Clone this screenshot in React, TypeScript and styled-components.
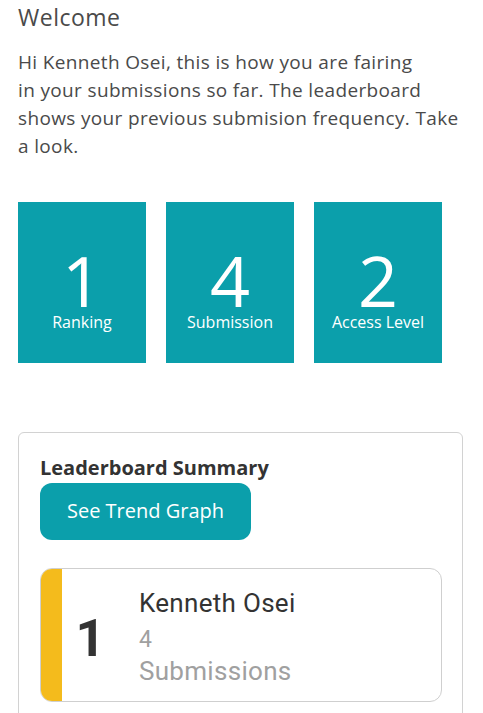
import React from "react";
import styled, { createGlobalStyle } from "styled-components";

const Global = createGlobalStyle`
  html, body { margin: 0; padding: 0; background: #fff; }
  body { font-family: "Open Sans", Lato, sans-serif; }
`;

const Page = styled.div`
  padding: 0 18px;
  display: flex;
  flex-direction: column;
  height: 713px;
  overflow: hidden;
  box-sizing: border-box;
`;

const Title = styled.h1`
  margin: 0;
  font-family: "Open Sans", sans-serif;
  font-weight: 400;
  font-size: 23px;
  line-height: 34px;
  letter-spacing: 0.5px;
  color: #4a4a4a;
`;

const Intro = styled.p`
  margin: 13.5px 0 0 0;
  font-family: "Open Sans", sans-serif;
  font-size: 19px;
  line-height: 28.3px;
  letter-spacing: 0.35px;
  color: #4a4a4a;
  white-space: nowrap;
`;

const Tiles = styled.div`
  display: flex;
  gap: 20px;
  margin-top: 41px;
`;

const Tile = styled.div`
  width: 128px;
  height: 161px;
  background: #0b9fab;
  color: #fff;
  display: flex;
  flex-direction: column;
  align-items: center;
  padding-top: 46px;
  box-sizing: border-box;
  font-family: "Open Sans", sans-serif;
`;

const TileValue = styled.div`
  font-size: 70px;
  line-height: 64px;
  font-weight: 400;
`;

const TileLabel = styled.div`
  font-size: 16px;
  line-height: 20px;
`;

const Card = styled.div`
  margin-top: 69px;
  width: 445px;
  border: 1.5px solid #d2d2d2;
  border-radius: 6px;
  padding: 23px 20px 20px 21px;
  box-sizing: border-box;
`;

const CardTitle = styled.h2`
  margin: 0;
  font-family: "Open Sans", sans-serif;
  font-weight: 700;
  font-size: 20px;
  line-height: 24px;
  color: #333;
`;

const TrendButton = styled.button`
  margin-top: 3.5px;
  width: 211px;
  height: 57px;
  padding: 0 0 2px 0;
  border: none;
  border-radius: 12px;
  background: #0b9fab;
  color: #fff;
  font-family: "Open Sans", sans-serif;
  font-size: 20px;
  cursor: pointer;
`;

const Entry = styled.div`
  margin-top: 28px;
  display: flex;
  height: 134px;
  border: 1.5px solid #cfcfcf;
  border-radius: 12px;
  overflow: hidden;
  box-sizing: border-box;
`;

const RankBar = styled.div<{ $color: string }>`
  width: 21px;
  background: ${(p) => p.$color};
  flex-shrink: 0;
`;

const RankNumber = styled.div`
  width: 57px;
  display: flex;
  align-items: center;
  justify-content: center;
  font-family: Roboto, sans-serif;
  font-weight: 700;
  font-size: 52px;
  color: #333;
  padding-top: 6px;
`;

const EntryInfo = styled.div`
  padding: 17.5px 0 0 20px;
  display: flex;
  flex-direction: column;
  font-family: Roboto, sans-serif;
`;

const EntryName = styled.div`
  font-size: 26px;
  line-height: 32px;
  letter-spacing: 0.3px;
  color: #333;
  font-weight: 400;
`;

const EntryCount = styled.div`
  margin-top: 6px;
  font-size: 23px;
  line-height: 30px;
  color: #a0a0a0;
`;

const EntryUnit = styled.div`
  font-size: 26px;
  line-height: 32px;
  letter-spacing: 0.3px;
  color: #a0a0a0;
`;

const stats = [
  { value: "1", label: "Ranking" },
  { value: "4", label: "Submission" },
  { value: "2", label: "Access Level" },
];

export default function App() {
  return (
    <>
      <Global />
      <Page>
        <Title>Welcome</Title>
        <Intro>
          Hi Kenneth Osei, this is how you are fairing
          <br />
          in your submissions so far. The leaderboard
          <br />
          shows your previous submision frequency. Take
          <br />a look.
        </Intro>
        <Tiles>
          {stats.map((s) => (
            <Tile key={s.label}>
              <TileValue>{s.value}</TileValue>
              <TileLabel>{s.label}</TileLabel>
            </Tile>
          ))}
        </Tiles>
        <Card>
          <CardTitle>Leaderboard Summary</CardTitle>
          <TrendButton>See Trend Graph</TrendButton>
          <Entry>
            <RankBar $color="#f4bb1c" />
            <RankNumber>1</RankNumber>
            <EntryInfo>
              <EntryName>Kenneth Osei</EntryName>
              <EntryCount>4</EntryCount>
              <EntryUnit>Submissions</EntryUnit>
            </EntryInfo>
          </Entry>
        </Card>
      </Page>
    </>
  );
}
